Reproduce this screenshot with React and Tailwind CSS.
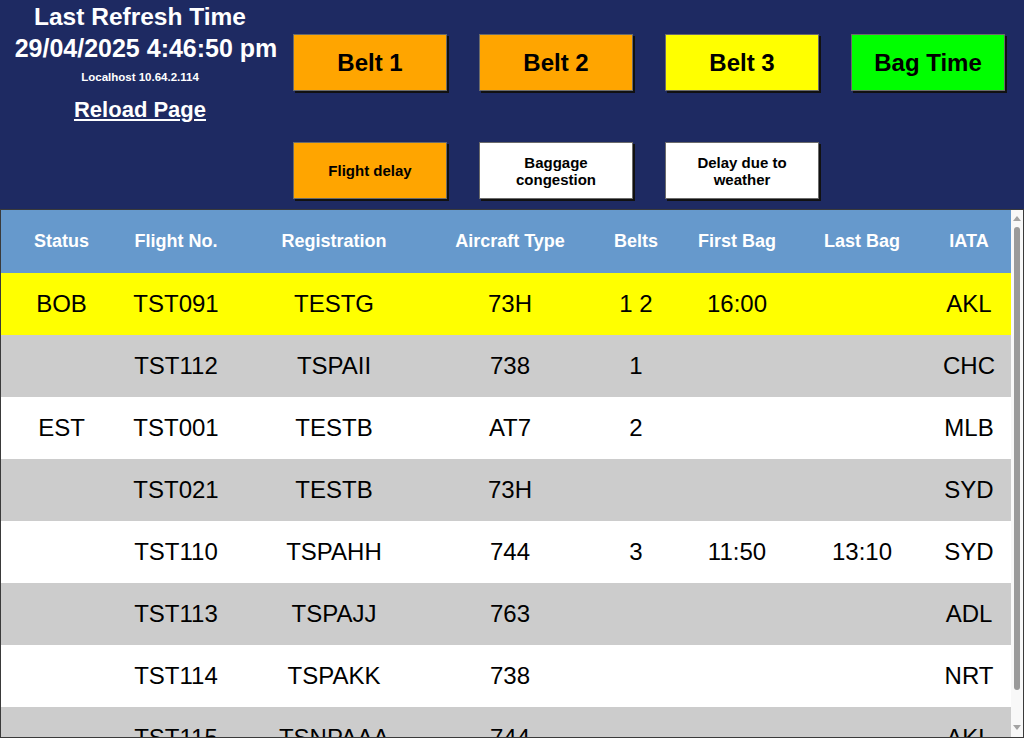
import React from 'react'

const BUTTONS_TOP = [
  { label: 'Belt 1', bg: 'bg-[#ffa500]' },
  { label: 'Belt 2', bg: 'bg-[#ffa500]' },
  { label: 'Belt 3', bg: 'bg-[#ffff00]' },
  { label: 'Bag Time', bg: 'bg-[#00ff00]' },
]

const BUTTONS_BOTTOM = [
  { label: 'Flight delay', bg: 'bg-[#ffa500]' },
  { label: 'Baggage congestion', bg: 'bg-white' },
  { label: 'Delay due to weather', bg: 'bg-white' },
]

const COLUMNS = [
  { label: 'Status', width: 'w-[121px]' },
  { label: 'Flight No.', width: 'w-[108px]' },
  { label: 'Registration', width: 'w-[208px]' },
  { label: 'Aircraft Type', width: 'w-[144px]' },
  { label: 'Belts', width: 'w-[108px]' },
  { label: 'First Bag', width: 'w-[94px]' },
  { label: 'Last Bag', width: 'w-[156px]' },
  { label: 'IATA', width: '' },
]

const FLIGHTS = [
  { status: 'BOB', flight: 'TST091', reg: 'TESTG', type: '73H', belts: '1 2', first: '16:00', last: '', iata: 'AKL', row: 'bg-[#ffff00]' },
  { status: '', flight: 'TST112', reg: 'TSPAII', type: '738', belts: '1', first: '', last: '', iata: 'CHC', row: 'bg-[#cccccc]' },
  { status: 'EST', flight: 'TST001', reg: 'TESTB', type: 'AT7', belts: '2', first: '', last: '', iata: 'MLB', row: 'bg-white' },
  { status: '', flight: 'TST021', reg: 'TESTB', type: '73H', belts: '', first: '', last: '', iata: 'SYD', row: 'bg-[#cccccc]' },
  { status: '', flight: 'TST110', reg: 'TSPAHH', type: '744', belts: '3', first: '11:50', last: '13:10', iata: 'SYD', row: 'bg-white' },
  { status: '', flight: 'TST113', reg: 'TSPAJJ', type: '763', belts: '', first: '', last: '', iata: 'ADL', row: 'bg-[#cccccc]' },
  { status: '', flight: 'TST114', reg: 'TSPAKK', type: '738', belts: '', first: '', last: '', iata: 'NRT', row: 'bg-white' },
  { status: '', flight: 'TST115', reg: 'TSNPAAA', type: '744', belts: '', first: '', last: '', iata: 'AKL', row: 'bg-[#cccccc]' },
]

function PanelButton({ label, bg, big }) {
  return (
    <button
      className={`${bg} w-[154px] h-[57px] border border-[#6b6b6b] shadow-[2px_2px_0_#111] font-bold text-black text-center px-2 ${
        big ? 'text-[24px] leading-[28px]' : 'text-[15px] leading-[17px]'
      }`}
    >
      {label}
    </button>
  )
}

// drawn scrollbar, the page shows a classic one beside the table
function ScrollTrack() {
  return (
    <div className="w-[12px] shrink-0 bg-[#f8f8f8] flex flex-col items-center pt-[6px] pb-[7px]">
      <svg width="8" height="5" viewBox="0 0 8 5">
        <path d="M0 5 L4 0 L8 5 Z" fill="#a3a3a3" />
      </svg>
      <div className="mt-[6px] w-[6px] h-[463px] rounded-full bg-[#9a9a9a]" />
      <div className="flex-1" />
      <svg width="8" height="5" viewBox="0 0 8 5">
        <path d="M0 0 L8 0 L4 5 Z" fill="#a3a3a3" />
      </svg>
    </div>
  )
}

export default function App() {
  return (
    <div className="h-[738px] flex flex-col bg-[#1e2a62] font-['Liberation_Sans',Arial,sans-serif] overflow-hidden">
      {/* Top panel */}
      <div className="flex h-[209px] shrink-0">
        <div className="w-[280px] flex flex-col items-center text-white font-bold pt-[3px]">
          <div className="text-[24.5px] leading-[28px]">Last Refresh Time</div>
          <div className="text-[25px] leading-[28px] mt-[3px] pl-[12px]">29/04/2025 4:46:50 pm</div>
          <div className="text-[11.5px] leading-[14px] mt-[8px]">Localhost 10.64.2.114</div>
          <a href="#" className="text-[22px] leading-[26px] underline mt-[13px]">Reload Page</a>
        </div>
        <div className="ml-[13px] pt-[34px] flex flex-col gap-[51px]">
          <div className="flex gap-[32px]">
            {BUTTONS_TOP.map(b => (
              <PanelButton key={b.label} label={b.label} bg={b.bg} big />
            ))}
          </div>
          <div className="flex gap-[32px]">
            {BUTTONS_BOTTOM.map(b => (
              <PanelButton key={b.label} label={b.label} bg={b.bg} />
            ))}
          </div>
        </div>
      </div>

      {/* Flight table */}
      <div className="flex-1 min-h-0 flex bg-white border border-[#3a3a3a]">
        <div className="flex-1 min-w-0 overflow-hidden">
          <table className="w-full table-fixed border-collapse">
            <colgroup>
              {COLUMNS.map(c => (
                <col key={c.label} className={c.width} />
              ))}
            </colgroup>
            <thead>
              <tr className="bg-[#6699cc] h-[63px]">
                {COLUMNS.map(c => (
                  <th
                    key={c.label}
                    className={`text-white text-[18px] font-bold text-center ${c.label === 'IATA' ? 'pr-[13px]' : ''}`}
                  >
                    {c.label}
                  </th>
                ))}
              </tr>
            </thead>
            <tbody className="text-[24px] text-black">
              {FLIGHTS.map(f => (
                <tr key={f.flight} className={`${f.row} h-[62px]`}>
                  <td className="text-center">{f.status}</td>
                  <td className="text-center">{f.flight}</td>
                  <td className="text-center">{f.reg}</td>
                  <td className="text-center">{f.type}</td>
                  <td className="text-center">{f.belts}</td>
                  <td className="text-center">{f.first}</td>
                  <td className="text-center">{f.last}</td>
                  <td className="text-center pr-[13px]">{f.iata}</td>
                </tr>
              ))}
            </tbody>
          </table>
        </div>
        <ScrollTrack />
      </div>
    </div>
  )
}
